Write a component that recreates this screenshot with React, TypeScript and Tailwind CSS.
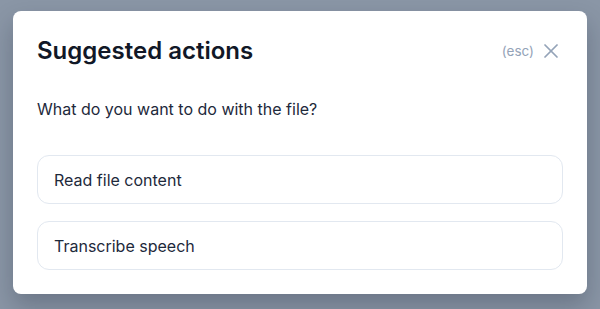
import { X } from "lucide-react";

const actions = ["Read file content", "Transcribe speech"];

export default function App() {
  return (
    <div
      className="h-[309px] w-[600px] overflow-hidden bg-[#8a96a6] px-[13px] pt-[11px]"
      style={{ fontFamily: "Inter, 'Noto Sans', sans-serif" }}
    >
      <div className="rounded-lg bg-white p-6 shadow-[0_12px_24px_rgba(15,23,42,0.25)]">
        <div className="flex items-center justify-between">
          <h2 className="text-2xl leading-8 font-semibold text-[#111827]">
            Suggested actions
          </h2>
          <div className="flex items-center gap-[5px] text-[#94a3b8]">
            <span className="text-[13.5px]">(esc)</span>
            <X size={24} strokeWidth={1.75} />
          </div>
        </div>

        <p className="mt-[30px] text-base leading-6 text-[#1e293b]">
          What do you want to do with the file?
        </p>

        <div className="mt-[34px] flex flex-col gap-[17px]">
          {actions.map((label) => (
            <button
              key={label}
              type="button"
              className="flex h-[49px] items-center rounded-xl border border-[#e2e8f0] bg-white px-4 text-left text-base text-[#1e293b]"
            >
              {label}
            </button>
          ))}
        </div>
      </div>
    </div>
  );
}
